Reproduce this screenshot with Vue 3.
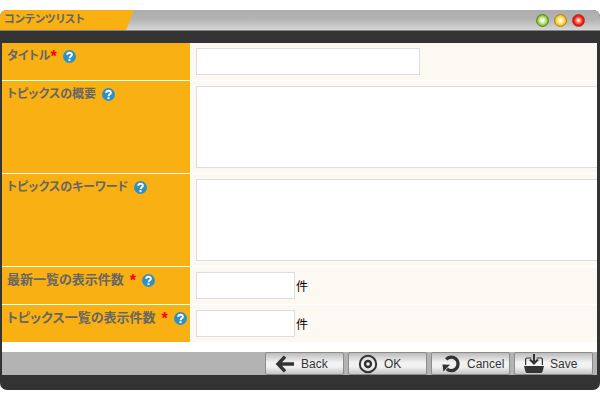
<script setup>
import { ref } from 'vue'

const rows = ref([
  { id: 'title', label: 'タイトル', required: true, tight: true, kind: 'text', value: '' },
  { id: 'summary', label: 'トピックスの概要', kind: 'area', value: '' },
  { id: 'keywords', label: 'トピックスのキーワード', kind: 'area', value: '' },
  { id: 'latest', label: '最新一覧の表示件数', required: true, kind: 'count', value: '' },
  { id: 'topics', label: 'トピックス一覧の表示件数', required: true, kind: 'count', value: '' },
])
const lights = ['green', 'yellow', 'red']
</script>

<template>
  <form class="window" @submit.prevent>
    <header class="titlebar">
      <h1 class="tab">コンテンツリスト</h1>
      <div class="lights">
        <span v-for="c in lights" :key="c" class="light" :class="c"></span>
      </div>
    </header>

    <div class="body">
      <div v-for="r in rows" :key="r.id" class="row">
        <div class="name" :class="{ large: r.kind === 'count' }">
          <label :for="r.id">{{ r.label }}</label>
          <span v-if="r.required" class="star" :class="{ tight: r.tight }">*</span>
          <svg class="help" viewBox="0 0 13 13">
            <circle cx="6.5" cy="6.5" r="6.5" fill="#2f90c8" />
            <path d="M4.2 4.9C4.3 2 9 2 8.9 4.7C8.8 6.3 6.6 6.2 6.5 8.2" fill="none" stroke="#fff" stroke-width="1.9" />
            <rect x="5.5" y="9.2" width="2" height="1.9" fill="#fff" />
          </svg>
        </div>
        <div class="field">
          <textarea v-if="r.kind === 'area'" :id="r.id" v-model="r.value"></textarea>
          <input v-else :id="r.id" v-model="r.value" type="text" :class="r.kind" />
          <span v-if="r.kind === 'count'" class="unit">件</span>
        </div>
      </div>
    </div>

    <footer class="actions">
      <button type="button">
        <svg class="icon" viewBox="0 0 20 20">
          <path d="M19 10H3M10 2.6L3 10L10 17.4" fill="none" stroke="#333" stroke-width="3.4" />
        </svg>
        <span>Back</span>
      </button>
      <button type="submit">
        <svg class="icon" viewBox="0 0 20 20">
          <circle cx="10" cy="10" r="8.2" fill="none" stroke="#333" stroke-width="2" />
          <circle cx="10" cy="10" r="3" fill="none" stroke="#333" stroke-width="2.4" />
        </svg>
        <span>OK</span>
      </button>
      <button type="button">
        <svg class="icon" viewBox="0 0 20 20">
          <path d="M5.2 5.3A6.8 6.8 0 1 1 5.8 15" fill="none" stroke="#333" stroke-width="3.3" />
          <path d="M1.4 10.6L9 10.8L2.4 17.6Z" fill="#333" />
        </svg>
        <span>Cancel</span>
      </button>
      <button type="submit">
        <svg class="icon" viewBox="0 0 20 20">
          <path d="M0 12H20L18.6 17.4Q18.2 19 16.4 19H3.6Q1.8 19 1.4 17.4Z" fill="#333" />
          <path d="M1.6 11V5.5Q1.6 4 3 4H7.5M12.5 4H17Q18.4 4 18.4 5.5V11" fill="none" stroke="#333" stroke-width="1.2" />
          <path d="M10 0V9M6 5.6L10 9.6L14 5.6" fill="none" stroke="#333" stroke-width="2.1" />
        </svg>
        <span>Save</span>
      </button>
    </footer>
  </form>
</template>

<style>
body {
  margin: 0;
  background: #fff;
}
</style>

<style scoped>
* {
  box-sizing: border-box;
}
.window {
  margin: 10px 0;
  padding: 0 3px 15px 2px;
  background: #333;
  border-radius: 7px;
  overflow: hidden;
  font-family: "Liberation Sans", "Noto Sans CJK JP", sans-serif;
  font-size: 12px;
  color: #000;
}
.titlebar {
  display: flex;
  justify-content: space-between;
  height: 21px;
  margin: 0 -3px 12px -2px;
  background: linear-gradient(#adadad, #b3b3b3 45%, #d6d6d6);
  border-bottom: 1px solid #858585;
}
.tab {
  width: 134px;
  margin: 0;
  padding-left: 4px;
  background: #f8b012;
  clip-path: polygon(0 0, 100% 0, 126px 100%, 0 100%);
  color: #666;
  font-size: 11px;
  font-weight: 700;
  line-height: 18px;
  font-feature-settings: "palt";
  white-space: nowrap;
}
.lights {
  display: flex;
  align-items: center;
  gap: 5px;
  padding-right: 15px;
}
.light {
  width: 13px;
  height: 13px;
  border-radius: 50%;
}
.green {
  border: 1px solid #5c842a;
  background: radial-gradient(circle closest-side, #fff 15%, #c0e67a 60%, #7fb51c);
}
.yellow {
  border: 1px solid #a8822c;
  background: radial-gradient(circle closest-side, #fff 15%, #ffe062 60%, #f2b705);
}
.red {
  border: 1px solid #a83a30;
  background: radial-gradient(circle closest-side, #fff 5%, #ff6a58 50%, #ee1208 85%);
}
.body {
  display: flex;
  flex-direction: column;
  gap: 1px;
  padding-bottom: 10px;
  background: #fff;
}
.row {
  display: grid;
  grid-template-columns: 188px minmax(0, 1fr);
  gap: 1px;
}
.name {
  display: flex;
  align-items: flex-start;
  padding: 4px 0 0 5px;
  background: #f8b012;
  color: #666;
  font-weight: 700;
  line-height: 18px;
  font-feature-settings: "palt";
  white-space: nowrap;
}
.name.large {
  font-size: 13px;
}
.star {
  margin-left: 6px;
  color: #f00;
  font-size: 16px;
  line-height: 20px;
}
.star.tight {
  margin-left: 0;
}
.help {
  width: 13px;
  height: 13px;
  margin: 3px 0 0 6px;
}
.field {
  display: flex;
  align-items: center;
  padding: 5px 0 5px 5px;
  background: #fcf9f3;
  overflow: hidden;
}
.field input,
.field textarea {
  display: block;
  margin: 0;
  padding: 4px;
  border: 1px solid #ddd;
  border-radius: 0;
  background: #fff;
  font: inherit;
  outline: 0;
}
.field input {
  height: 27px;
}
.text {
  width: 224px;
}
.count {
  width: 99px;
}
.field textarea {
  flex: 0 0 calc(100% + 8px);
  height: 82px;
  resize: none;
}
.unit {
  padding: 2px 0 0 1px;
  line-height: 18px;
}
.actions {
  display: flex;
  justify-content: flex-end;
  gap: 4px;
  padding-right: 4px;
  background: #b3b3b3;
}
.actions button {
  display: flex;
  align-items: center;
  width: 79px;
  height: 23px;
  padding: 0 0 0 9px;
  border: 1px solid #8c8c8c;
  border-radius: 2px;
  background: linear-gradient(#bcbcbc, #f2f2f2 45%, #f2f2f2 65%, #c4c4c4);
  color: #333;
  font: 12px/16px "Liberation Sans", Arial, sans-serif;
}
.actions span {
  flex: 1;
  padding-left: 6px;
  text-align: left;
}
.icon {
  flex: none;
  width: 20px;
  height: 20px;
}
</style>
